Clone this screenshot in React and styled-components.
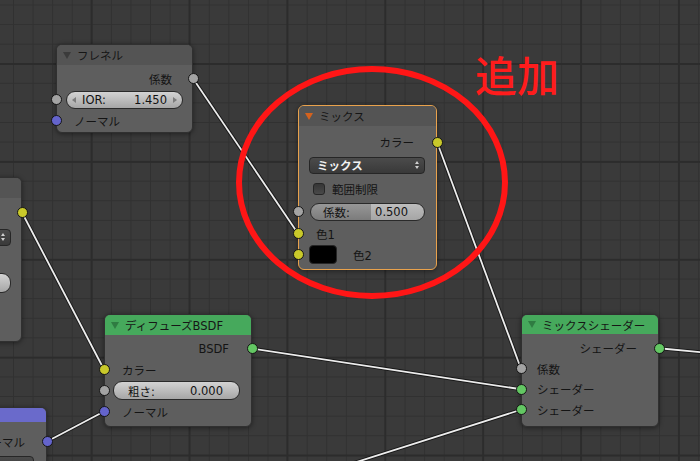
import React from 'react'
import styled, { createGlobalStyle } from 'styled-components'

const GlobalStyle = createGlobalStyle`
  html, body {
    margin: 0;
    padding: 0;
    background: #3a3a3a;
  }
  body {
    font-family: "DejaVu Sans", "Noto Sans CJK JP", sans-serif;
  }
`

const SOCKET = {
  gray: '#a3a3a3',
  yellow: '#c9c92a',
  blue: '#6464cc',
  green: '#63c763',
}

const Canvas = styled.div`
  position: relative;
  width: 700px;
  height: 461px;
  overflow: hidden;
  background-color: #3a3a3a;
  background-image:
    linear-gradient(to right, #2c2c2c 0 2px, transparent 2px),
    linear-gradient(to bottom, #2c2c2c 0 2px, transparent 2px),
    linear-gradient(to right, #313131 0 1.3px, transparent 1.3px),
    linear-gradient(to bottom, #313131 0 1.3px, transparent 1.3px);
  background-size: 97.9px 97.9px, 97.9px 97.9px, 19.58px 19.58px, 19.58px 19.58px;
  background-position: 90.6px 0, 0 63px, 13px 0, 0 4.5px;
  font-family: "DejaVu Sans", "Noto Sans CJK JP", sans-serif;
`

const Layer = styled.svg`
  position: absolute;
  left: 0;
  top: 0;
  width: 700px;
  height: 461px;
  pointer-events: none;
  overflow: visible;
`

const Node = styled.div`
  position: absolute;
  left: ${p => p.$x}px;
  top: ${p => p.$y}px;
  width: ${p => p.$w}px;
  height: ${p => (p.$h ? `${p.$h}px` : 'auto')};
  box-sizing: border-box;
  display: flex;
  flex-direction: column;
  background: #5e5e5e;
  border: 1px solid ${p => (p.$selected ? '#e9a24c' : '#303030')};
  border-radius: 6px;
  box-shadow: 0 1px 5px rgba(0, 0, 0, 0.45);
`

const Header = styled.div`
  display: flex;
  align-items: center;
  gap: 6px;
  height: ${p => p.$h ?? 20}px;
  padding-left: ${p => p.$pl ?? 6}px;
  flex: none;
  background: ${p => p.$color};
  border-radius: 5px 5px 0 0;
  color: #161616;
  font-size: 11.5px;
  white-space: nowrap;
  overflow: hidden;
`

const Collapse = styled.span`
  flex: none;
  width: 0;
  height: 0;
  border-left: 4px solid transparent;
  border-right: 4px solid transparent;
  border-top: 7px solid ${p => p.$color};
`

const Body = styled.div`
  display: flex;
  flex-direction: column;
  padding: ${p => p.$pt ?? 3}px 0 ${p => p.$pb ?? 2}px;
`

const Row = styled.div`
  position: relative;
  display: flex;
  align-items: center;
  justify-content: ${p => (p.$out ? 'flex-end' : 'flex-start')};
  gap: 7px;
  height: ${p => p.$h ?? 21}px;
  padding: 0 ${p => p.$r ?? 10}px 0 ${p => p.$l ?? 17}px;
  color: #141414;
  font-size: 11.5px;
  white-space: nowrap;
`

const Socket = styled.span`
  position: absolute;
  top: 50%;
  ${p => (p.$out ? 'right' : 'left')}: -6.5px;
  width: 11px;
  height: 11px;
  margin-top: -5.5px;
  box-sizing: border-box;
  border-radius: 50%;
  background: ${p => p.$color};
  border: 1px solid #151515;
`

const NumField = styled.div`
  flex: 1;
  display: flex;
  align-items: center;
  gap: 6px;
  height: ${p => p.$h ?? 18}px;
  box-sizing: border-box;
  padding: 0 ${p => p.$pr ?? 5}px 0 ${p => p.$pl ?? 5}px;
  border: 1px solid #2a2a2a;
  border-radius: 9px;
  background: ${p =>
    p.$fill
      ? `linear-gradient(rgba(255,255,255,0.14), rgba(0,0,0,0.08)), linear-gradient(to right, #868686 0 ${p.$fill}%, #b3b3b3 ${p.$fill}%)`
      : 'linear-gradient(#d3d3d3, #a6a6a6)'};
  color: #121212;
  font-size: 11.5px;
`

const Spacer = styled.span`
  flex: 1;
`

const Nudge = styled.span`
  flex: none;
  width: 0;
  height: 0;
  border-top: 3.5px solid transparent;
  border-bottom: 3.5px solid transparent;
  ${p => (p.$dir === 'left' ? 'border-right: 4px solid #7c7c7c;' : 'border-left: 4px solid #7c7c7c;')}
`

const Dropdown = styled.div`
  flex: 1;
  display: flex;
  align-items: center;
  justify-content: space-between;
  height: 17px;
  box-sizing: border-box;
  padding: 0 5px 0 7px;
  border: 1px solid #262626;
  border-radius: 4px;
  background: linear-gradient(#4b4b4b, #393939);
  color: #f2f2f2;
  font-weight: bold;
  font-size: 11.5px;
`

const UpDown = styled.span`
  display: flex;
  flex-direction: column;
  gap: 2px;
  &::before,
  &::after {
    content: '';
    border-left: 2.5px solid transparent;
    border-right: 2.5px solid transparent;
  }
  &::before {
    border-bottom: 3px solid #cfcfcf;
  }
  &::after {
    border-top: 3px solid #cfcfcf;
  }
`

const Check = styled.span`
  flex: none;
  width: 12px;
  height: 12px;
  box-sizing: border-box;
  border: 1px solid #262626;
  border-radius: 3px;
  background: linear-gradient(#363636, #494949);
`

const Swatch = styled.span`
  flex: none;
  width: 28px;
  height: 19px;
  box-sizing: border-box;
  margin-right: 9px;
  border: 1px solid #262626;
  border-radius: 4px;
  background: #000;
`

const Note = styled.div`
  position: absolute;
  left: 475px;
  top: 53px;
  color: #ff1c1c;
  font-family: "Noto Sans CJK JP", sans-serif;
  font-size: 42px;
  font-weight: 500;
  line-height: 42px;
`

const wires = [
  [193, 78.5, 298, 233.5],
  [437, 142, 521, 368.75],
  [22, 212.5, 104, 369.5],
  [252, 348.5, 521, 389.25],
  [300, 480, 521, 409.75],
  [659, 348.25, 704, 352.5],
  [47, 441.5, 104, 411.5],
]

const Wires = () => (
  <Layer viewBox="0 0 700 461">
    {wires.map(([x1, y1, x2, y2], i) => (
      <g key={i}>
        <line x1={x1} y1={y1} x2={x2} y2={y2} stroke="#111" strokeWidth="3.6" strokeOpacity="0.85" />
        <line x1={x1} y1={y1} x2={x2} y2={y2} stroke="#ededed" strokeWidth="1.8" />
      </g>
    ))}
  </Layer>
)

export default function App() {
  return (
    <>
      <GlobalStyle />
      <Canvas>
        <Wires />

        {/* partly hidden node on the left */}
        <Node $x={-125} $y={177} $w={147} $h={165}>
          <Header $color="#545454" />
          <Body $pt={4}>
            <Row $out $h={21}>
              <Socket $out $color={SOCKET.yellow} />
            </Row>
            <Row $h={28} $l={10}>
              <Dropdown>
                <span />
                <UpDown />
              </Dropdown>
            </Row>
            <Row $h={21} />
            <Row $h={22} $l={10} $r={10}>
              <NumField $h={20} />
            </Row>
          </Body>
        </Node>

        {/* フレネル */}
        <Node $x={56} $y={44} $w={137}>
          <Header $color="#545454">
            <Collapse $color="#3b3b3b" />
            フレネル
          </Header>
          <Body $pt={3} $pb={1}>
            <Row $out $r={20}>
              係数
              <Socket $out $color={SOCKET.gray} />
            </Row>
            <Row $l={9} $r={9}>
              <Socket $color={SOCKET.gray} />
              <NumField>
                <Nudge $dir="left" />
                IOR:
                <Spacer />
                1.450
                <Nudge $dir="right" />
              </NumField>
            </Row>
            <Row>
              <Socket $color={SOCKET.blue} />
              ノーマル
            </Row>
          </Body>
        </Node>

        {/* ミックス (selected) */}
        <Node $x={298} $y={105} $w={139} $selected>
          <Header $color="#545454">
            <Collapse $color="#d4621e" />
            ミックス
          </Header>
          <Body $pt={5} $pb={4}>
            <Row $out $h={22} $r={22}>
              カラー
              <Socket $out $color={SOCKET.yellow} />
            </Row>
            <Row $h={24} $l={10} $r={11}>
              <Dropdown>
                ミックス
                <UpDown />
              </Dropdown>
            </Row>
            <Row $h={23} $l={14}>
              <Check />
              範囲制限
            </Row>
            <Row $h={23} $l={11} $r={11}>
              <Socket $color={SOCKET.gray} />
              <NumField $pl={12} $pr={16} $fill={53}>
                係数:
                <Spacer />
                0.500
              </NumField>
            </Row>
            <Row $h={21} $l={17}>
              <Socket $color={SOCKET.yellow} />
              色1
            </Row>
            <Row $h={21} $l={10}>
              <Socket $color={SOCKET.yellow} />
              <Swatch />
              色2
            </Row>
          </Body>
        </Node>

        {/* ディフューズBSDF */}
        <Node $x={104} $y={314} $w={148}>
          <Header $color="#46a95c">
            <Collapse $color="#2f7c42" />
            ディフューズBSDF
          </Header>
          <Body $pt={3} $pb={4}>
            <Row $out $r={22}>
              BSDF
              <Socket $out $color={SOCKET.green} />
            </Row>
            <Row>
              <Socket $color={SOCKET.yellow} />
              カラー
            </Row>
            <Row $l={8} $r={11}>
              <Socket $color={SOCKET.gray} />
              <NumField $h={19} $pl={14} $pr={16}>
                粗さ:
                <Spacer />
                0.000
              </NumField>
            </Row>
            <Row>
              <Socket $color={SOCKET.blue} />
              ノーマル
            </Row>
          </Body>
        </Node>

        {/* ミックスシェーダー */}
        <Node $x={521} $y={314} $w={138}>
          <Header $color="#46a95c" $h={19}>
            <Collapse $color="#2f7c42" />
            ミックスシェーダー
          </Header>
          <Body $pt={4} $pb={6}>
            <Row $out $h={20.5} $r={21}>
              シェーダー
              <Socket $out $color={SOCKET.green} />
            </Row>
            <Row $h={20.5} $l={15}>
              <Socket $color={SOCKET.gray} />
              係数
            </Row>
            <Row $h={20.5} $l={15}>
              <Socket $color={SOCKET.green} />
              シェーダー
            </Row>
            <Row $h={20.5} $l={15}>
              <Socket $color={SOCKET.green} />
              シェーダー
            </Row>
          </Body>
        </Node>

        {/* ノーマルマップ, cut by the bottom-left corner */}
        <Node $x={-100} $y={407} $w={147} $h={90}>
          <Header $color="#6a6acb" $h={14} $pl={14}>
            ノーマルマップ
          </Header>
          <Body $pt={9}>
            <Row $out $r={21}>
              ノーマル
              <Socket $out $color={SOCKET.blue} />
            </Row>
            <Row $h={24} $l={10} $r={12}>
              <Dropdown />
            </Row>
          </Body>
        </Node>

        <Layer viewBox="0 0 700 461">
          <ellipse cx="372" cy="182.5" rx="133" ry="113.5" fill="none" stroke="#ff1616" strokeWidth="6" />
        </Layer>
        <Note>追加</Note>
      </Canvas>
    </>
  )
}
